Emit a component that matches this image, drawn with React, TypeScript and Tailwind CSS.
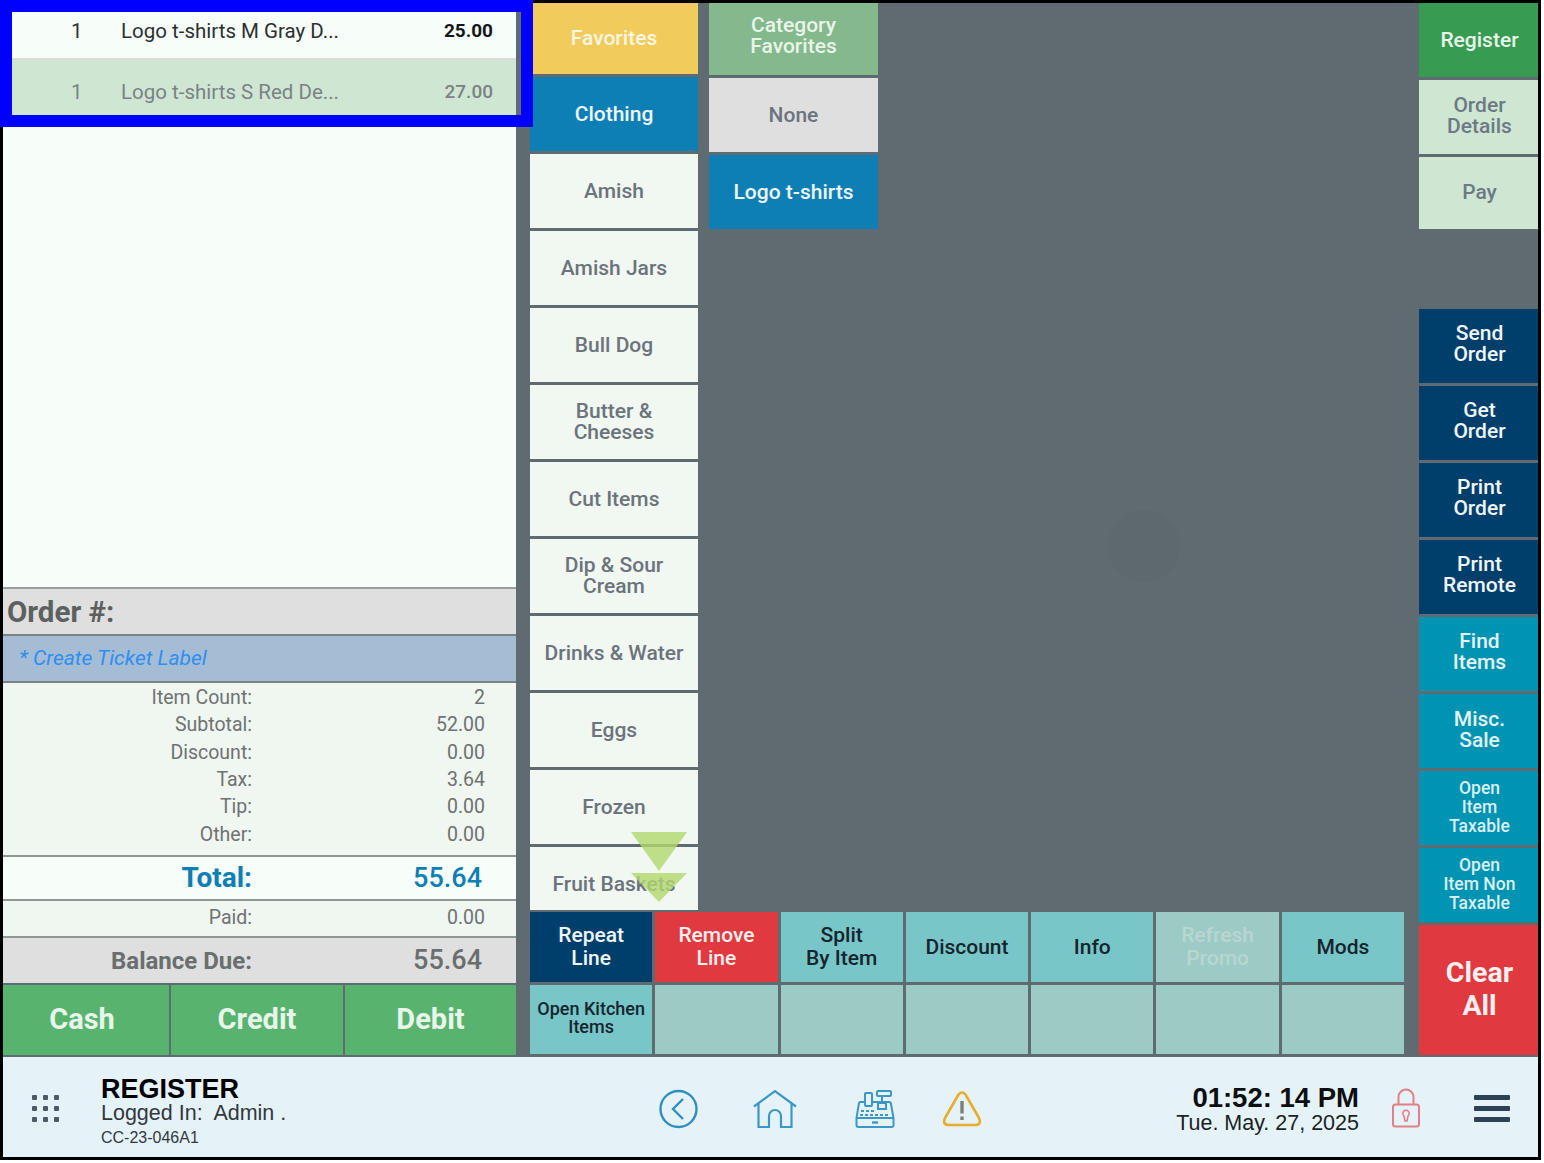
import React from "react";

const categories = [
  { label: "Favorites", cls: "h-[71px] bg-[#f2cb5d] text-[#fdf6e0]" },
  { label: "Clothing", cls: "h-[74px] bg-[#0e7fb5] text-[#eef6fa]" },
  { label: "Amish" },
  { label: "Amish Jars" },
  { label: "Bull Dog" },
  { label: "Butter &\nCheeses" },
  { label: "Cut Items" },
  { label: "Dip & Sour\nCream" },
  { label: "Drinks & Water" },
  { label: "Eggs" },
  { label: "Frozen" },
  { label: "Fruit Baskets" },
];

const sideTop = [
  { label: "Register", cls: "h-[74px] pl-[2px] bg-[#379b52] text-[#e8f5ea]" },
  { label: "Order\nDetails", cls: "h-[74px] pb-[3px] pl-[2px] bg-[#cfe7d2] text-[#6b7a85]" },
  { label: "Pay", cls: "h-[72px] pb-[2px] pl-[2px] bg-[#cfe7d2] text-[#6b7a85]" },
];

const sideBottom = [
  { label: "Send\nOrder", cls: "pb-[4px] pl-[2px] bg-[#003f6b] text-[#f1f6f9]" },
  { label: "Get\nOrder", cls: "pb-[4px] pl-[2px] bg-[#003f6b] text-[#f1f6f9]" },
  { label: "Print\nOrder", cls: "pb-[4px] pl-[2px] bg-[#003f6b] text-[#f1f6f9]" },
  { label: "Print\nRemote", cls: "pb-[4px] pl-[2px] bg-[#003f6b] text-[#f1f6f9]" },
  { label: "Find\nItems", cls: "pb-[4px] pl-[2px] bg-[#0093b2] text-[#e3f4f8]" },
  { label: "Misc.\nSale", cls: "pb-[2px] pl-[2px] bg-[#0093b2] text-[#e3f4f8]" },
  { label: "Open\nItem\nTaxable", cls: "pb-[2px] pl-[2px] bg-[#0093b2] text-[#d9f0f5] text-[17.5px] leading-[19px]" },
  { label: "Open\nItem Non\nTaxable", cls: "pb-[2px] pl-[2px] bg-[#0093b2] text-[#d9f0f5] text-[17.5px] leading-[19px]" },
];

const summary = [
  ["Item Count:", "2"],
  ["Subtotal:", "52.00"],
  ["Discount:", "0.00"],
  ["Tax:", "3.64"],
  ["Tip:", "0.00"],
  ["Other:", "0.00"],
];

const Btn: React.FC<{ label: string; cls?: string }> = ({ label, cls }) => (
  <div
    className={`flex shrink-0 items-center justify-center whitespace-pre-line text-center font-medium ${
      cls && cls.includes("leading-") ? "" : "text-[21px] leading-[21px]"
    } ${cls ?? "h-[74px] bg-[#f1f7f1] text-[#6b747c]"}`}
  >
    {label}
  </div>
);

const Icons = () => (
  <div className="flex items-center">
    <svg width="40" height="40" viewBox="0 0 40 40" fill="none" stroke="#2f8fc0" strokeWidth="2.4" className="ml-[-1px]">
      <circle cx="20.5" cy="20" r="18" />
      <path d="M25 10 L15 20 L25 30" strokeWidth="2.4" />
    </svg>
    <svg width="44" height="40" viewBox="0 0 44 40" fill="none" stroke="#3d97c6" strokeWidth="2.2" className="ml-[55px]">
      <path d="M1 17.5 L22 2 L43 17.5" />
      <path d="M5.5 15 V38 H16 V27 A6 6 0 0 1 28 27 V38 H38.5 V15" />
    </svg>
    <svg width="40" height="40" viewBox="0 0 40 40" fill="none" stroke="#3d97c6" strokeWidth="2" className="ml-[58px]">
      <path d="M10 13 H5.5 Q4 13 3.8 15 L1.5 29 V36 Q1.5 38 3.5 38 H36.5 Q38.5 38 38.5 36 V29 L36 15 Q35.8 13 34 13 H17" />
      <path d="M1.5 29 H38.5" />
      <rect x="10" y="4" width="7" height="13" rx="1" />
      <rect x="22" y="2" width="14" height="5" rx="1" />
      <path d="M27 7 V13" />
      <rect x="23" y="14" width="8" height="6" />
      <path d="M6 22 H21 M5 26 H35" strokeWidth="2.2" strokeDasharray="3 2" />
      <path d="M17 33.5 H23" strokeWidth="2.4" />
    </svg>
    <svg width="40" height="37" viewBox="0 0 40 37" fill="none" stroke="#e9ad2c" strokeWidth="2.6" className="ml-[47px]">
      <path d="M16.5 4.5 Q20 0.5 23.5 4.5 L37 28 Q40 35 33 35 H7 Q0 35 3 28 Z" strokeLinejoin="round" />
      <path d="M20 11 V23.5" stroke="#7d8078" strokeWidth="3.4" />
      <path d="M20 26.5 V30" stroke="#7d8078" strokeWidth="3.4" />
    </svg>
  </div>
);

export default function App() {
  return (
    <div className="relative h-[1163px] w-[1544px] overflow-hidden bg-white font-['Roboto',sans-serif]">
      <div className="flex h-[1160px] w-[1541px] flex-col border-[3px] border-black bg-[#5f6b70]">
        <div className="flex h-[1054px] shrink-0">
          {/* ticket */}
          <div className="flex h-[1052px] w-[513px] shrink-0 flex-col text-[20px]">
            <div className="flex-1 border-b-2 border-[#9a9e9e] bg-[#f7fdf9]">
              <div className="flex h-[57px] items-center border-b-2 border-[#d9dcd9] pl-[68px] pr-[23px] pt-[2px] text-[20.5px] text-[#2b2f33]">
                <span className="w-[50px]">1</span>
                <span>Logo t-shirts M Gray D...</span>
                <span className="ml-auto text-[19px] font-bold text-[#14171a]">25.00</span>
              </div>
              <div className="flex h-[64px] items-center bg-[#cfe7d2] pl-[68px] pr-[23px] text-[20.5px] text-[#7b8285]">
                <span className="w-[50px]">1</span>
                <span>Logo t-shirts S Red De...</span>
                <span className="ml-auto text-[19px] font-medium">27.00</span>
              </div>
            </div>
            <div className="flex h-[47px] shrink-0 items-center border-b-2 border-[#7b8285] bg-[#dfdfdf] pl-[4px] pt-[2px] text-[29.5px] font-bold text-[#5d6060]">
              Order #:
            </div>
            <div className="flex h-[47px] shrink-0 items-center border-b-2 border-[#7b8285] bg-[#a4bdd5] pl-[16px] text-[21px] italic text-[#2f8ef0]">
              * Create Ticket Label
            </div>
            <div className="h-[174px] shrink-0 border-b-2 border-[#8f9696] bg-[#f0f7f1] pt-[1px] text-[19.5px] text-[#6e7272]">
              {summary.map(([k, v]) => (
                <div key={k} className="flex h-[27.3px] items-center">
                  <span className="w-[249px] text-right">{k}</span>
                  <span className="w-[233px] text-right">{v}</span>
                </div>
              ))}
            </div>
            <div className="flex h-[44px] shrink-0 items-center border-b-2 border-[#8f9696] bg-[#f7fdf9] text-[28px] font-bold text-[#0e7fb5]">
              <span className="w-[249px] text-right">Total:</span>
              <span className="w-[230px] text-right text-[27px] font-medium">55.64</span>
            </div>
            <div className="flex h-[37px] shrink-0 items-center border-b-2 border-[#8f9696] bg-[#f0f7f1] pb-[1px] text-[19.5px] text-[#6e7272]">
              <span className="w-[249px] text-right">Paid:</span>
              <span className="w-[233px] text-right">0.00</span>
            </div>
            <div className="flex h-[45px] shrink-0 items-center bg-[#dfdfdf] font-bold text-[#6a6e6e]">
              <span className="w-[249px] text-right text-[24px]">Balance Due:</span>
              <span className="w-[230px] text-right text-[27px] font-medium">55.64</span>
            </div>
            <div className="mt-[2px] flex h-[70px] shrink-0 gap-[2px] text-[29px] font-bold text-[#e8f5ea]">
              <div className="flex w-[166px] items-center justify-center bg-[#58b36f] pr-[8px]">Cash</div>
              <div className="flex w-[172px] items-center justify-center bg-[#58b36f]">Credit</div>
              <div className="flex w-[171px] items-center justify-center bg-[#58b36f]">Debit</div>
            </div>
          </div>

          {/* category and item buttons */}
          <div className="ml-[14px] flex w-[874px] shrink-0 flex-col">
            <div className="mb-[2px] flex h-[907px] shrink-0 gap-[11px] overflow-hidden">
              <div className="flex w-[168px] flex-col gap-[3px]">
                {categories.map((c) => (
                  <Btn key={c.label} label={c.label} cls={c.cls} />
                ))}
              </div>
              <div className="flex w-[169px] flex-col gap-[3px]">
                <Btn label={"Category\nFavorites"} cls="h-[72px] pb-[6px] bg-[#84b88d] text-[#e8f5e8]" />
                <Btn label="None" cls="h-[74px] bg-[#dfdfdf] text-[#6b747c]" />
                <Btn label="Logo t-shirts" cls="h-[74px] bg-[#0e7fb5] text-[#eef6fa]" />
              </div>
            </div>
            <div className="grid h-[142px] grid-cols-7 grid-rows-2 gap-[3px]">
              <Btn label={"Repeat\nLine"} cls="bg-[#003f6b] text-[#f1f6f9] text-[21px] leading-[23px]" />
              <Btn label={"Remove\nLine"} cls="bg-[#e0393f] text-[#fdf0f0] text-[21px] leading-[23px]" />
              <Btn label={"Split\nBy Item"} cls="bg-[#79c6c8] text-[#14252e] text-[21px] leading-[23px]" />
              <Btn label="Discount" cls="bg-[#79c6c8] pt-[2px] text-[#14252e]" />
              <Btn label="Info" cls="bg-[#79c6c8] pt-[2px] text-[#14252e]" />
              <Btn label={"Refresh\nPromo"} cls="bg-[#9ccbc6] text-[#b9d6d0] text-[21px] leading-[23px]" />
              <Btn label="Mods" cls="bg-[#79c6c8] pt-[2px] text-[#14252e]" />
              <Btn label={"Open Kitchen\nItems"} cls="bg-[#79c6c8] pb-[2px] text-[#14252e] text-[18px] leading-[18px]" />
              <div className="bg-[#9ccbc6]" />
              <div className="bg-[#9ccbc6]" />
              <div className="bg-[#9ccbc6]" />
              <div className="bg-[#9ccbc6]" />
              <div className="bg-[#9ccbc6]" />
              <div className="bg-[#9ccbc6]" />
            </div>
          </div>

          {/* right hand actions */}
          <div className="ml-[15px] flex w-[119px] shrink-0 flex-col">
            <div className="flex h-[306px] shrink-0 flex-col gap-[3px]">
              {sideTop.map((b) => (
                <Btn key={b.label} label={b.label} cls={b.cls} />
              ))}
            </div>
            <div className="flex flex-col gap-[3px]">
              {sideBottom.map((b) => (
                <Btn key={b.label} label={b.label} cls={`h-[74px] ${b.cls}`} />
              ))}
              <div className="flex h-[130px] items-center justify-center bg-[#e0393f] pb-[2px] pl-[2px] text-center text-[28.5px] font-bold leading-[33px] text-[#fdf0f0]">
                Clear
                <br />
                All
              </div>
            </div>
          </div>
        </div>

        {/* footer */}
        <div className="flex flex-1 items-center bg-[#e5f3f9] pt-[3px] font-['Liberation_Sans',sans-serif]">
          <div className="ml-[29px] grid w-[27px] shrink-0 grid-cols-3 gap-x-[6px] gap-y-[6px]">
            {Array.from({ length: 9 }).map((_, i) => (
              <span key={i} className="h-[5px] w-[5px] rounded-[1px] bg-[#4d5a66]" />
            ))}
          </div>
          <div className="ml-[42px] w-[558px] shrink-0 pt-[7px] text-[#33383d]">
            <div className="text-[27px] font-bold leading-[24px] text-black">REGISTER</div>
            <div className="text-[21.5px] leading-[24px]">Logged In:&nbsp; Admin .</div>
            <div className="mt-[4px] text-[16px] leading-[18px]">CC-23-046A1</div>
          </div>
          <Icons />
          <div className="ml-auto mr-[33px] pt-[2px] text-right text-[#1c1f22]">
            <div className="text-[27.5px] font-bold leading-[27px] text-[#0c0e10]">01:52: 14 PM</div>
            <div className="text-[21.5px] leading-[25px]">Tue. May. 27, 2025</div>
          </div>
          <svg width="30" height="40" viewBox="0 0 30 40" fill="none" stroke="#e27f84" strokeWidth="2" className="mb-[2px]">
            <path d="M6.5 16.5 V9 A7.5 7.5 0 0 1 21.5 9 V16.5" />
            <rect x="1" y="16.5" width="26" height="22" rx="2.5" />
            <path d="M12 28 A3.2 3.2 0 1 1 16 28 L15 33 H13 Z" strokeWidth="1.6" />
          </svg>
          <div className="mb-[1px] ml-[52px] mr-[28px] flex w-[36px] flex-col gap-[6px]">
            <span className="h-[5px] rounded-[1px] bg-[#2e4256]" />
            <span className="h-[5px] rounded-[1px] bg-[#2e4256]" />
            <span className="h-[5px] rounded-[1px] bg-[#2e4256]" />
          </div>
        </div>
      </div>

      {/* scroll arrows over the category list */}
      <svg width="56" height="71" viewBox="0 0 56 71" className="absolute left-[631px] top-[832px] opacity-80">
        <path d="M0 0 H56 L28 39 Z M0 41 H56 L28 70 Z" fill="#b3d86f" />
      </svg>
      {/* faint logo mark on the empty area */}
      <div className="absolute left-[1108px] top-[510px] h-[72px] w-[72px] rounded-full bg-[#5d696d]" />
      {/* blue highlight drawn over the order lines */}
      <div className="absolute left-0 top-0 h-[127px] w-[533px] border-[12px] border-[#0000ff]" />
    </div>
  );
}
